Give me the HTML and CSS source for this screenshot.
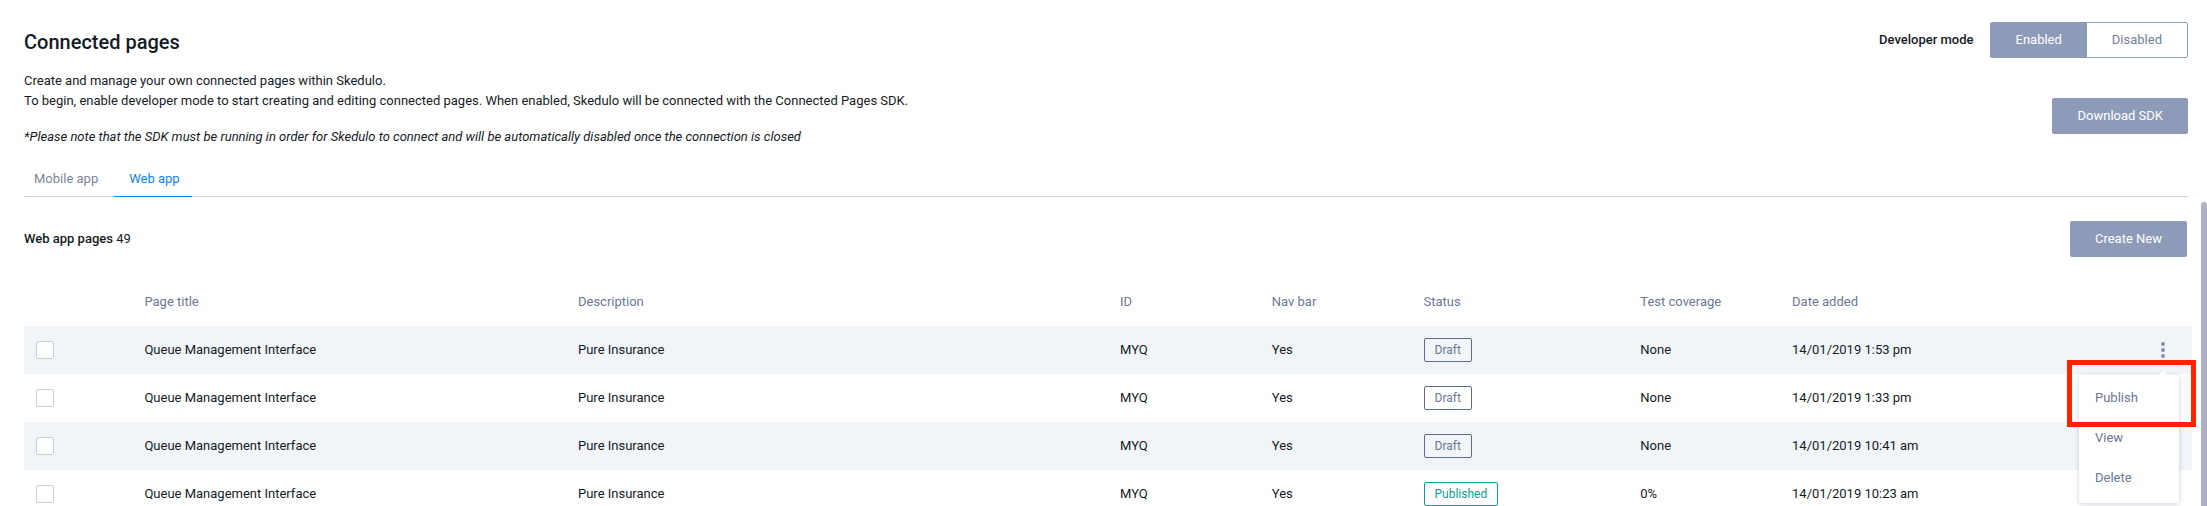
FILE: index.html
```html
<!DOCTYPE html>
<html lang="en">
<head>
<meta charset="utf-8">
<title>Connected pages</title>
<link rel="stylesheet" href="styles.css">
</head>
<body>
<div class="page">
  <header class="intro">
    <div class="intro-text">
      <h1 class="title">Connected pages</h1>
      <p class="copy">Create and manage your own connected pages within Skedulo.<br>To begin, enable developer mode to start creating and editing connected pages. When enabled, Skedulo will be connected with the Connected Pages SDK.</p>
      <p class="copy note">*Please note that the SDK must be running in order for Skedulo to connect and will be automatically disabled once the connection is closed</p>
    </div>
    <div class="intro-actions">
      <div class="mode" role="group" aria-labelledby="mode-label">
        <span class="mode-label" id="mode-label">Developer mode</span>
        <div class="toggle">
          <button class="toggle-option toggle-on" type="button" aria-pressed="true">Enabled</button>
          <button class="toggle-option" type="button" aria-pressed="false">Disabled</button>
        </div>
      </div>
      <button class="button" type="button">Download SDK</button>
    </div>
  </header>
  <nav class="tabs">
    <a class="tab" href="#mobile">Mobile app</a>
    <a class="tab tab-active" href="#web">Web app</a>
  </nav>
  <main class="panel">
    <div class="content">
      <div class="toolbar">
        <h2 class="count"><strong>Web app pages</strong> 49</h2>
        <button class="button" type="button">Create New</button>
      </div>
      <table class="table">
        <colgroup>
          <col class="col-check"><col class="col-title"><col class="col-description"><col class="col-small"><col class="col-small"><col class="col-status"><col class="col-small"><col class="col-date"><col class="col-check">
        </colgroup>
        <thead>
          <tr><th></th><th>Page title</th><th>Description</th><th>ID</th><th>Nav bar</th><th>Status</th><th>Test coverage</th><th>Date added</th><th></th></tr>
        </thead>
        <tbody>
          <tr>
            <td><input class="check" type="checkbox" aria-label="Select page 1"></td>
            <td>Queue Management Interface</td><td>Pure Insurance</td><td>MYQ</td><td>Yes</td>
            <td><span class="badge">Draft</span></td><td>None</td><td>14/01/2019 1:53 pm</td>
            <td class="actions">
              <button class="more" type="button" aria-label="Page actions"><svg width="4" height="16" viewBox="0 0 4 16"><circle cx="2" cy="2" r="2"/><circle cx="2" cy="8" r="2"/><circle cx="2" cy="14" r="2"/></svg></button>
              <div class="menu">
                <button class="menu-item" type="button">Publish</button>
                <button class="menu-item" type="button">View</button>
                <button class="menu-item" type="button">Delete</button>
                <div class="highlight"></div>
              </div>
            </td>
          </tr>
          <tr>
            <td><input class="check" type="checkbox" aria-label="Select page 2"></td>
            <td>Queue Management Interface</td><td>Pure Insurance</td><td>MYQ</td><td>Yes</td>
            <td><span class="badge">Draft</span></td><td>None</td><td>14/01/2019 1:33 pm</td>
            <td></td>
          </tr>
          <tr>
            <td><input class="check" type="checkbox" aria-label="Select page 3"></td>
            <td>Queue Management Interface</td><td>Pure Insurance</td><td>MYQ</td><td>Yes</td>
            <td><span class="badge">Draft</span></td><td>None</td><td>14/01/2019 10:41 am</td>
            <td></td>
          </tr>
          <tr>
            <td><input class="check" type="checkbox" aria-label="Select page 4"></td>
            <td>Queue Management Interface</td><td>Pure Insurance</td><td>MYQ</td><td>Yes</td>
            <td><span class="badge badge-published">Published</span></td><td>0%</td><td>14/01/2019 10:23 am</td>
            <td></td>
          </tr>
        </tbody>
      </table>
    </div>
    <div class="scrollbar"></div>
  </main>
</div>
</body>
</html>
```
FILE: styles.css
```css
* { box-sizing: border-box; }

body {
  margin: 0;
  background: #fff;
  color: #151b26;
  font: 13px/20px Roboto, "Liberation Sans", sans-serif;
}

button { font: inherit; cursor: pointer; }

.page {
  display: flex;
  flex-direction: column;
  height: 100vh;
  overflow: hidden;
}

.intro {
  display: flex;
  justify-content: space-between;
  padding: 22px 19px 0 24px;
}

.title {
  margin: 6px 0 15px;
  font-size: 20px;
  line-height: 28px;
  font-weight: 500;
}

.copy { margin: 0 0 16px; }
.note { font-style: italic; margin-bottom: 20px; }

.intro-actions {
  display: flex;
  flex-direction: column;
  align-items: flex-end;
  gap: 40px;
}

.mode {
  display: flex;
  align-items: center;
  gap: 16px;
}

.mode-label { font-weight: 500; }

.toggle {
  display: flex;
  height: 36px;
  border: 1px solid #8d9bb8;
  border-radius: 2px;
}

.toggle-option {
  padding: 0 25px;
  border: 0;
  background: #fff;
  color: #75809a;
}

.toggle-on { background: #8d9bb8; color: #fff; }

.button {
  height: 36px;
  padding: 0 25px;
  border: 0;
  border-radius: 2px;
  background: #8d9bb8;
  color: #fff;
}

.tabs {
  display: flex;
  gap: 6px;
  flex: none;
  margin: 0 19px 0 24px;
  border-bottom: 1px solid #cccfdd;
}

.tab {
  padding: 2px 10px 7px;
  margin-bottom: -1px;
  border-bottom: 1px solid transparent;
  color: #7d8499;
  line-height: 20px;
  text-decoration: none;
}

.tab-active {
  padding: 2px 12px 7px 15px;
  border-color: #0b83f6;
  color: #0b83f6;
}

.panel {
  display: flex;
  flex: 1;
  min-height: 0;
  padding-top: 5px;
}

.content {
  flex: 1;
  padding: 19px 9px 0 24px;
}

.toolbar {
  display: flex;
  justify-content: space-between;
  align-items: center;
  padding-right: 5px;
}

.count { margin: 0; font-size: 13px; font-weight: 400; }
.count strong { font-weight: 500; }

.scrollbar {
  width: 6px;
  border-radius: 3px 3px 0 0;
  background: #adb3c2;
}

.table {
  width: 100%;
  margin-top: 21px;
  border-collapse: collapse;
  table-layout: fixed;
}

.col-check { width: 5%; }
.col-title { width: 20%; }
.col-description { width: 25%; }
.col-small { width: 7%; }
.col-status { width: 10%; }
.col-date { width: 14%; }

.table th,
.table td {
  height: 48px;
  padding: 0 12px;
  text-align: left;
  font-weight: 400;
  vertical-align: middle;
}

.table th { color: #6b7894; }
.table tbody tr:nth-child(odd) { background: #f1f5f8; }

.check {
  display: block;
  appearance: none;
  width: 18px;
  height: 18px;
  margin: 0;
  border: 1px solid #cccedb;
  border-radius: 2px;
  background: #fff;
}

.badge {
  display: block;
  width: fit-content;
  padding: 1px 10px;
  border: 1px solid #5f6d8c;
  border-radius: 2px;
  color: #6b7894;
  font-size: 12px;
}

.badge-published { border-color: #0d9f8f; color: #0d9f8f; }

.table .actions { position: relative; }

.more {
  display: block;
  margin-left: auto;
  padding: 4px 15px;
  border: 0;
  background: none;
}

.more svg { display: block; fill: #8490a8; }

.menu {
  position: absolute;
  z-index: 1;
  top: 49px;
  right: 13px;
  width: 100px;
  padding: 3px 0 5px;
  border-radius: 2px;
  background: #fff;
  box-shadow: 0 1px 5px rgba(60, 70, 100, 0.25);
}

.menu::before {
  content: "";
  position: absolute;
  top: -4px;
  right: 12px;
  border: solid transparent;
  border-width: 0 4px 4px;
  border-bottom-color: #fff;
}

.menu-item {
  display: block;
  width: 100%;
  height: 40px;
  padding: 0 16px;
  border: 0;
  background: none;
  color: #6b7894;
  text-align: left;
}

.highlight {
  position: absolute;
  top: -15px;
  right: -17px;
  width: 129px;
  height: 67px;
  border: 5px solid #ff2300;
  pointer-events: none;
}
```
